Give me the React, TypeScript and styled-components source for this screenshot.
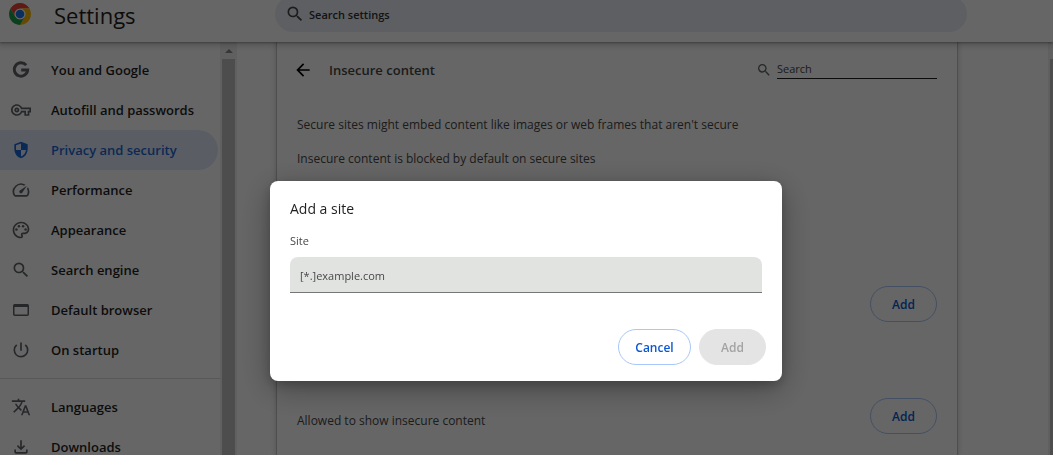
import React from 'react';
import styled, { createGlobalStyle, css } from 'styled-components';
import {
  MdArrowBack,
  MdOutlineFileDownload,
  MdOutlinePalette,
  MdOutlineVpnKey,
  MdPowerSettingsNew,
  MdSearch,
  MdSpeed,
  MdTranslate,
} from 'react-icons/md';

const GlobalStyle = createGlobalStyle`
  *, *::before, *::after { box-sizing: border-box; }
  body {
    margin: 0;
    overflow: hidden;
    background: #fff;
    color: #1f1f1f;
    font-family: 'Open Sans', 'Noto Sans', sans-serif;
    font-size: 12px;
    line-height: 20px;
  }
  button, input { font-family: inherit; }
`;

const Page = styled.div`
  display: flex;
  flex-direction: column;
  height: 100vh;
`;

/* The toolbar is partly scrolled off the top edge of the window. */
const Toolbar = styled.header`
  position: relative;
  z-index: 1;
  display: flex;
  flex: none;
  align-items: center;
  height: 56px;
  margin-top: -14px;
  background: #fff;
  box-shadow: 0 1px 2px rgba(0, 0, 0, 0.3), 0 2px 6px 2px rgba(0, 0, 0, 0.16);
`;

const Brand = styled.div`
  display: flex;
  flex: none;
  align-items: center;
  gap: 23px;
  width: 275px;
  padding-left: 9px;
`;

const PageTitle = styled.h1`
  margin: 0;
  padding-top: 2px;
  font-size: 22px;
  font-weight: 500;
  line-height: 28px;
`;

const SearchBox = styled.label`
  display: flex;
  flex: 1;
  align-items: center;
  gap: 4px;
  max-width: 692px;
  height: 36px;
  padding: 0 10px;
  border-radius: 18px;
  background: #e9eef6;
  color: #474747;
`;

const SearchInput = styled.input`
  flex: 1;
  min-width: 0;
  padding: 2px 0 0;
  border: 0;
  outline: 0;
  background: transparent;
  font-size: 11px;
  font-weight: 600;
  line-height: 20px;
  &::placeholder { color: #303134; opacity: 1; }
`;

const Body = styled.div`
  display: flex;
  flex: 1;
  min-height: 0;
`;

const Sidebar = styled.nav`
  flex: none;
  width: 220px;
  padding-top: 8px;
  overflow: hidden;
`;

const MenuLink = styled.a<{ $active?: boolean }>`
  display: flex;
  align-items: center;
  gap: 20px;
  height: 40px;
  margin-right: 2px;
  padding-left: 11px;
  border-radius: 0 20px 20px 0;
  color: #1f1f1f;
  font-size: 13px;
  font-weight: 600;
  text-decoration: none;
  svg { flex: none; color: #5f6368; }
  ${(p) =>
    p.$active &&
    css`
      background: #e1eafb;
      color: #1967d2;
      svg { color: #1967d2; }
    `}
`;

const MenuDivider = styled.hr`
  height: 1px;
  margin: 8px 0;
  border: 0;
  background: #dadce0;
`;

const ScrollTrack = styled.div<{ $clipped?: boolean }>`
  display: flex;
  flex: none;
  flex-direction: column;
  width: ${(p) => (p.$clipped ? '5px' : '17px')};
  padding: ${(p) => (p.$clipped ? '17px 0 0 2px' : '0 2px')};
  background: #f1f1f1;
`;

const ScrollArrow = styled.div`
  display: flex;
  flex: none;
  align-items: center;
  justify-content: center;
  height: 17px;
  &::before {
    border: 4px solid transparent;
    border-top: 0;
    border-bottom-color: #8a8a8a;
    content: '';
  }
`;

const ScrollThumb = styled.div`
  flex: 1;
  background: #c1c1c1;
`;

const Main = styled.main`
  display: flex;
  flex: 1;
  min-width: 0;
  padding: 0 40px;
  overflow: hidden;
`;

const Card = styled.section`
  flex: 1;
  max-width: 680px;
  padding: 0 20px;
  background: #fff;
  box-shadow: 0 0 0 1px rgba(60, 64, 67, 0.2), 0 1px 5px 1px rgba(60, 64, 67, 0.25);
`;

const CardHeader = styled.div`
  display: flex;
  align-items: center;
  height: 56px;
`;

const BackButton = styled.button`
  display: flex;
  margin: 0 14px 0 -6px;
  padding: 2px;
  border: 0;
  background: transparent;
  color: #000;
`;

const CardTitle = styled.h2`
  flex: 1;
  margin: 0;
  color: #474747;
  font-size: 13px;
  font-weight: 600;
`;

const CardSearch = styled.label`
  display: flex;
  align-items: center;
  gap: 5px;
  color: #5f6368;
`;

const CardSearchInput = styled.input`
  width: 160px;
  height: 18px;
  padding: 0 0 2px;
  border: 0;
  border-bottom: 1px solid #1f1f1f;
  outline: 0;
  background: transparent;
  font-size: 11px;
  &::placeholder { color: #474747; opacity: 1; }
`;

const Notes = styled.div`
  display: flex;
  flex-direction: column;
  gap: 14px;
  padding-top: 17px;
  color: #474747;
`;

const Note = styled.p`
  margin: 0;
`;

const Exceptions = styled.div`
  display: flex;
  flex-direction: column;
  gap: 64px;
  padding-top: 111px;
`;

const ExceptionRow = styled.div`
  display: flex;
  align-items: center;
  justify-content: flex-end;
  height: 48px;
`;

const ExceptionLabel = styled.span`
  flex: 1;
  padding-top: 10px;
  color: #474747;
`;

const PillButton = styled.button`
  min-width: 67px;
  height: 36px;
  padding: 1px 16px 0;
  border: 1px solid #a8c7fa;
  border-radius: 18px;
  background: transparent;
  color: #0b57d0;
  font-size: 12px;
  font-weight: 600;
  line-height: 20px;
  &:disabled {
    border-color: #e4e4e4;
    background: #e4e4e4;
    color: #a3a3a3;
  }
`;

const CancelButton = styled(PillButton)`
  min-width: 73px;
`;

const Backdrop = styled.div`
  position: fixed;
  z-index: 2;
  inset: 0;
  display: flex;
  align-items: flex-start;
  justify-content: center;
  padding: 181px 21px 20px 20px;
  background: rgba(0, 0, 0, 0.6);
`;

const Dialog = styled.form`
  width: 512px;
  max-width: 100%;
  padding: 20px 20px 16px;
  border-radius: 8px;
  background: #fff;
  box-shadow: 0 4px 12px rgba(0, 0, 0, 0.2), 0 8px 32px rgba(0, 0, 0, 0.32);
`;

const DialogTitle = styled.h2`
  margin: 0 0 16px;
  font-size: 14px;
  font-weight: 400;
  line-height: 16px;
`;

const FieldLabel = styled.label`
  display: block;
  margin-bottom: 8px;
  color: #474747;
  font-size: 11px;
  font-weight: 500;
  line-height: 16px;
`;

const Field = styled.input`
  display: block;
  width: 100%;
  height: 36px;
  padding: 2px 10px 0;
  border: 0;
  border-bottom: 1px solid #747775;
  border-radius: 8px 8px 0 0;
  outline: 0;
  background: #e1e3e1;
  font-size: 11px;
  &::placeholder { color: #474747; opacity: 1; }
`;

const DialogActions = styled.div`
  display: flex;
  justify-content: flex-end;
  gap: 8px;
  margin: 36px -4px 0 0;
`;

const ChromeLogo = () => (
  <svg width="22" height="22" viewBox="2 2 44 44" aria-hidden="true">
    <circle cx="24" cy="24" r="13" fill="#fff" />
    <path d="M43.05 13A22 22 0 0 0 4.95 13L14.47 29.5A11 11 0 0 1 24 13Z" fill="#ea4335" />
    <path d="M43.05 13A22 22 0 0 1 24 46L33.53 29.5A11 11 0 0 0 24 13Z" fill="#fbbc04" />
    <path d="M24 46A22 22 0 0 1 4.95 13L14.47 29.5A11 11 0 0 0 33.53 29.5Z" fill="#1e9e44" />
    <circle cx="24" cy="24" r="8.6" fill="#1a73e8" />
  </svg>
);

const GoogleMark = () => (
  <svg width="20" height="20" viewBox="0 0 20 20" fill="none" aria-hidden="true">
    <path d="M15.2 5.2A6.7 6.7 0 1 0 16.7 10H10.2" stroke="currentColor" strokeWidth="2.9" />
  </svg>
);

const ShieldIcon = () => (
  <svg width="20" height="20" viewBox="0 -960 960 960" fill="currentColor" aria-hidden="true">
    <path d="M480-80q-139-35-229.500-159.500T160-516v-244l320-120 320 120v244q0 152-90.500 276.500T480-80Zm0-84q97-30 162-118.500T718-480H480v-315l-240 90v207q0 7 2 18h238v316Z" />
  </svg>
);

const WindowIcon = () => (
  <svg width="20" height="20" viewBox="0 0 20 20" aria-hidden="true">
    <rect x="2.750" y="4.750" width="14.500" height="10.500" rx="1" fill="none" stroke="currentColor" strokeWidth="1.500" />
    <path d="M3 4h14v3H3z" fill="currentColor" />
  </svg>
);

const primaryItems = [
  { label: 'You and Google', icon: <GoogleMark /> },
  { label: 'Autofill and passwords', icon: <MdOutlineVpnKey size={20} /> },
  { label: 'Privacy and security', icon: <ShieldIcon />, active: true },
  { label: 'Performance', icon: <MdSpeed size={20} /> },
  { label: 'Appearance', icon: <MdOutlinePalette size={20} /> },
  { label: 'Search engine', icon: <MdSearch size={20} /> },
  { label: 'Default browser', icon: <WindowIcon /> },
  { label: 'On startup', icon: <MdPowerSettingsNew size={20} /> },
];

const secondaryItems = [
  { label: 'Languages', icon: <MdTranslate size={20} /> },
  { label: 'Downloads', icon: <MdOutlineFileDownload size={20} /> },
];

export default function App() {
  return (
    <>
      <GlobalStyle />
      <Page>
        <Toolbar>
          <Brand>
            <ChromeLogo />
            <PageTitle>Settings</PageTitle>
          </Brand>
          <SearchBox>
            <MdSearch size={20} />
            <SearchInput type="text" aria-label="Search settings" placeholder="Search settings" />
          </SearchBox>
        </Toolbar>
        <Body>
          <Sidebar>
            {primaryItems.map((item) => (
              <MenuLink key={item.label} href="#" $active={item.active}>
                {item.icon}
                {item.label}
              </MenuLink>
            ))}
            <MenuDivider />
            {secondaryItems.map((item) => (
              <MenuLink key={item.label} href="#">
                {item.icon}
                {item.label}
              </MenuLink>
            ))}
          </Sidebar>
          <ScrollTrack>
            <ScrollArrow />
            <ScrollThumb />
          </ScrollTrack>
          <Main>
            <Card>
              <CardHeader>
                <BackButton type="button" aria-label="Back">
                  <MdArrowBack size={20} />
                </BackButton>
                <CardTitle>Insecure content</CardTitle>
                <CardSearch>
                  <MdSearch size={16} />
                  <CardSearchInput type="text" aria-label="Search" placeholder="Search" />
                </CardSearch>
              </CardHeader>
              <Notes>
                <Note>Secure sites might embed content like images or web frames that aren't secure</Note>
                <Note>Insecure content is blocked by default on secure sites</Note>
              </Notes>
              <Exceptions>
                <ExceptionRow>
                  <PillButton type="button">Add</PillButton>
                </ExceptionRow>
                <ExceptionRow>
                  <ExceptionLabel>Allowed to show insecure content</ExceptionLabel>
                  <PillButton type="button">Add</PillButton>
                </ExceptionRow>
              </Exceptions>
            </Card>
          </Main>
          <ScrollTrack $clipped>
            <ScrollThumb />
          </ScrollTrack>
        </Body>
      </Page>
      <Backdrop>
        <Dialog role="dialog" aria-labelledby="add-site-title">
          <DialogTitle id="add-site-title">Add a site</DialogTitle>
          <FieldLabel htmlFor="site">Site</FieldLabel>
          <Field id="site" type="text" placeholder="[*.]example.com" />
          <DialogActions>
            <CancelButton type="button">Cancel</CancelButton>
            <PillButton type="submit" disabled>
              Add
            </PillButton>
          </DialogActions>
        </Dialog>
      </Backdrop>
    </>
  );
}
